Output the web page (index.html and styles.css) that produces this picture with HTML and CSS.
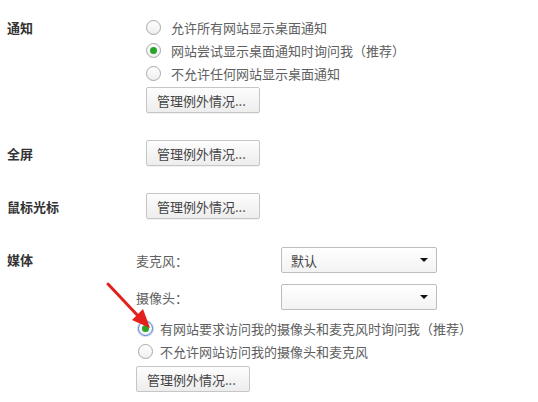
FILE: index.html
```html
<!DOCTYPE html>
<html lang="zh-CN">
<head>
    <meta charset="UTF-8">
    <title>内容设置</title>
    <link rel="stylesheet" href="styles.css">
</head>
<body>
    <div class="page">
        <section class="row row-top">
            <h3 class="label">通知</h3>
            <div class="content">
                <label class="option"><span class="radio"></span>允许所有网站显示桌面通知</label>
                <label class="option"><span class="radio checked"></span><span>网站尝试显示桌面通知时询问我<span class="paren">（</span>推荐<span class="paren">）</span></span></label>
                <label class="option"><span class="radio"></span>不允许任何网站显示桌面通知</label>
                <button class="btn btn-first">管理例外情况...</button>
            </div>
        </section>

        <section class="row row-gap">
            <h3 class="label">全屏</h3>
            <div class="content">
                <button class="btn">管理例外情况...</button>
            </div>
        </section>

        <section class="row row-gap">
            <h3 class="label">鼠标光标</h3>
            <div class="content">
                <button class="btn">管理例外情况...</button>
            </div>
        </section>

        <section class="row row-media">
            <h3 class="label label-media">媒体</h3>
            <div class="content media">
                <div class="device">
                    <span class="device-name">麦克风<span class="colon">：</span></span>
                    <div class="select"><span>默认</span><span class="caret"></span></div>
                </div>
                <div class="device device-second">
                    <span class="device-name">摄像头<span class="colon">：</span></span>
                    <div class="select"><span></span><span class="caret"></span></div>
                </div>
                <label class="option option-media"><span class="radio checked focused"></span><span>有网站要求访问我的摄像头和麦克风时询问我<span class="paren">（</span>推荐<span class="paren">）</span></span></label>
                <label class="option option-media"><span class="radio"></span>不允许网站访问我的摄像头和麦克风</label>
                <button class="btn btn-media">管理例外情况...</button>
            </div>
        </section>

        <!-- 红色箭头标注 -->
        <svg class="arrow" width="60" height="60" viewBox="0 0 60 60">
            <line x1="4" y1="4" x2="36" y2="38" stroke="#e3201c" stroke-width="3" stroke-linecap="round"/>
            <polygon points="46,48 28,40 39,29" fill="#e3201c"/>
        </svg>
    </div>
</body>
</html>
```

FILE: styles.css
```css
body {
    margin: 0;
    padding: 0;
    background-color: #ffffff;
    color: #555555;
    font-family: "Noto Sans CJK SC", sans-serif;
    font-size: 13px;
}

.page {
    position: relative;
    padding: 16px 0 0 7px;
}

.row {
    display: grid;
    grid-template-columns: 139px 1fr;
    align-items: center;
}

.row-top {
    align-items: start;
}

.row-gap {
    margin-top: 27px;
}

.row-media {
    margin-top: 28px;
    align-items: start;
}

.label {
    margin: 0;
    font-size: 13px;
    font-weight: bold;
    color: #333333;
    line-height: 23px;
}

.label-media {
    line-height: 26px;
}

.content {
    display: flex;
    flex-direction: column;
    align-items: flex-start;
}

.option {
    display: flex;
    align-items: center;
    height: 23px;
    line-height: 23px;
    color: #606060;
    white-space: nowrap;
}

/* 全角括号保持一个字宽 */
.paren {
    display: inline-block;
    width: 13px;
    text-align: center;
}

.colon {
    display: inline-block;
    width: 13px;
    text-align: center;
}

.radio {
    width: 13px;
    height: 13px;
    border: 1px solid #a8a8a8;
    border-radius: 50%;
    background: linear-gradient(#ffffff, #eeeeee);
    margin-right: 10px;
    display: flex;
    align-items: center;
    justify-content: center;
    box-sizing: content-box;
}

.radio.checked::after {
    content: "";
    width: 7px;
    height: 7px;
    border-radius: 50%;
    background-color: #2aa329;
}

.radio.focused {
    border-color: #4d7cd6;
    box-shadow: 0 0 0 1px #c9d7f2;
}

.btn {
    width: 114px;
    height: 26px;
    padding: 0 0 0 10px;
    text-align: left;
    font-family: inherit;
    font-size: 13px;
    color: #444444;
    background: linear-gradient(#fdfdfd, #ededed);
    border: 1px solid #c6c6c6;
    border-radius: 2px;
    box-shadow: 0 1px 0 rgba(0, 0, 0, 0.05);
}

.btn-first {
    margin-top: 2px;
}

.media {
    margin-left: -10px;
}

.device {
    display: grid;
    grid-template-columns: 145px 156px;
    align-items: center;
}

.device-second {
    margin-top: 11px;
}

.device-name {
    color: #606060;
}

.select {
    height: 24px;
    border: 1px solid #bdbdbd;
    border-radius: 2px;
    background: linear-gradient(#ffffff, #f3f3f3);
    display: flex;
    align-items: center;
    justify-content: space-between;
    padding: 0 8px 0 9px;
    color: #444444;
}

.caret {
    width: 0;
    height: 0;
    border-left: 4px solid transparent;
    border-right: 4px solid transparent;
    border-top: 4px solid #111111;
}

.option-media {
    margin-left: 2px;
}

.option-media:first-of-type {
    margin-top: 7px;
}

.option-media .radio {
    margin-right: 7px;
}

.btn-media {
    margin-top: 3px;
}

.arrow {
    position: absolute;
    left: 104px;
    top: 280px;
}
```
